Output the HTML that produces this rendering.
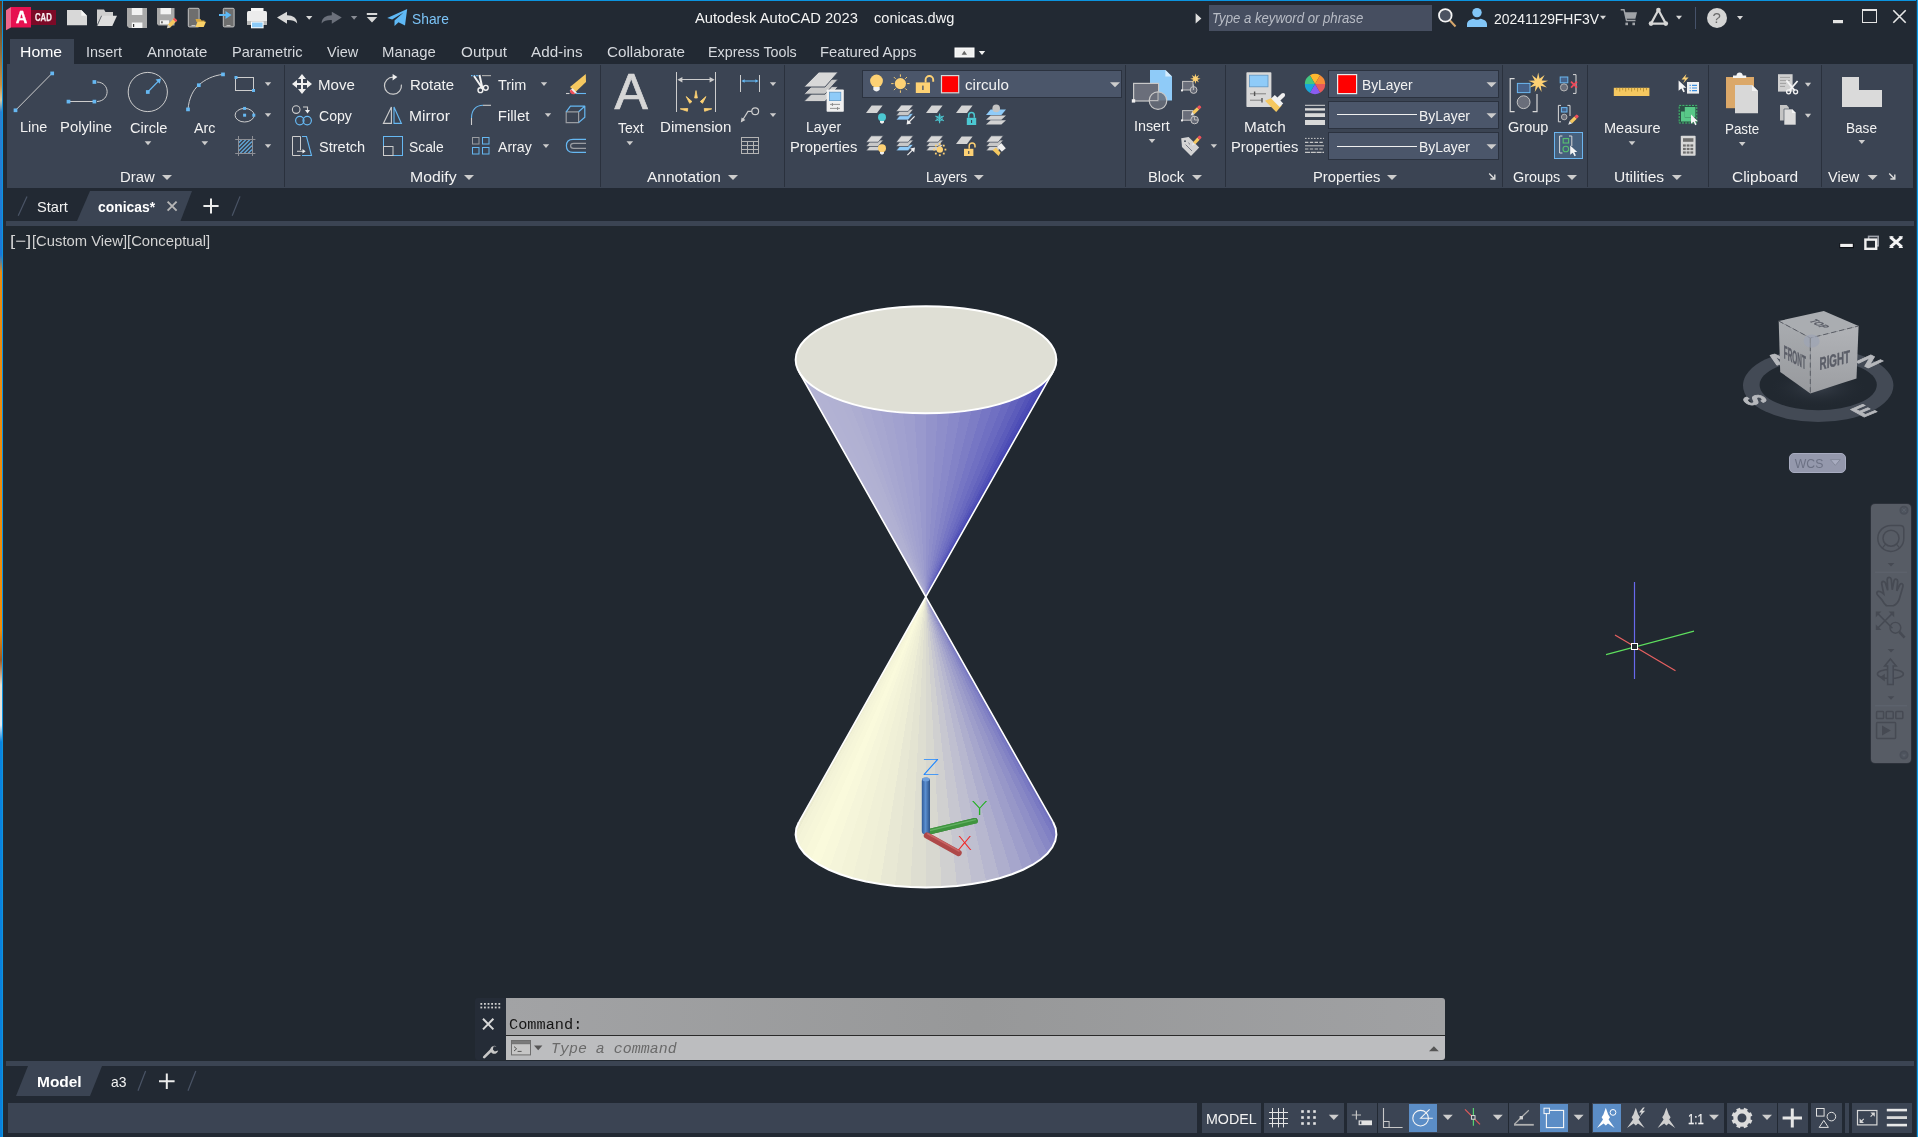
<!DOCTYPE html>
<html lang="en"><head><meta charset="utf-8"><title>Autodesk AutoCAD 2023 - conicas.dwg</title>
<style>
html,body{margin:0;padding:0;background:#222933;}
body{width:1918px;height:1137px;overflow:hidden;position:relative;font-family:"Liberation Sans",sans-serif;}
#app{position:absolute;left:0;top:0;width:1918px;height:1137px;overflow:hidden;background:#222933;}
.b{position:absolute;}
.t{z-index:3;}
#view{z-index:1;}
#icons{z-index:2;}
.t{position:absolute;white-space:pre;line-height:20px;height:20px;transform-origin:0 50%;font-family:"Liberation Sans",sans-serif;}
svg{position:absolute;left:0;top:0;overflow:visible;}
#view{will-change:transform;}
svg text{font-family:"Liberation Sans",sans-serif;}
svg text.cmp{font-weight:bold;fill:#b6b8bc;stroke:#b6b8bc;stroke-width:1.3px;stroke-linejoin:round;}
svg text.cube{font-weight:bold;fill:#5a5d67;stroke:#5a5d67;stroke-width:0.5px;}
svg text.thin{font-family:"DejaVu Sans","Liberation Sans",sans-serif;font-weight:200;}
</style></head>
<body><div id="app">
<div id="window">
<div class="b" style="left:0px;top:0px;width:2px;height:1137px;background:#0a78d0;background:linear-gradient(180deg,#5a3a1a 0px,#8a6a3a 50px,#c89040 85px,#d8c8a0 100px,#2a80d0 112px,#1a78d8 255px,#e88a10 272px,#f08c08 630px,#a05a20 660px,#e8e0d0 685px,#e0e8f0 725px,#0a84e0 742px,#0a80dc 1137px);"></div>
<div class="b" style="left:2px;top:0px;width:1px;height:1137px;background:#0b94e0;"></div>
<div class="b" style="left:3px;top:0px;width:1px;height:1137px;background:#262a32;"></div>
<div class="b" style="left:0px;top:0px;width:1918px;height:1px;background:#0b94e0;"></div>
<div class="b" style="left:1916px;top:0px;width:1px;height:1137px;background:#1f3f58;"></div>
<div class="b" style="left:1917px;top:0px;width:1px;height:1137px;background:#0b9ae8;"></div>
</div>
<main id="viewport">
<div class="b" style="left:4px;top:226px;width:1912px;height:835px;background:#212830;"></div>
<div class="b" style="left:1871px;top:504px;width:40px;height:259px;background:#575c65;border-radius:4px;box-shadow:0 0 0 1px #2c313a;"></div>
<div class="b" style="left:1789px;top:453px;width:57px;height:20px;background:#9498ac;border-radius:5px;border:1px solid #a8acc0;box-sizing:border-box;"></div>
<span class="t" style="left:10.14px;top:231px;font-size:15px;color:#d4d4d4;transform:scaleX(1.2467);">[−]</span>
<span class="t" style="left:32.01px;top:231px;font-size:15px;color:#d4d4d4;transform:scaleX(0.9861);">[Custom View][Conceptual]</span>
</main>
<header id="titlebar">
<div class="b" style="left:1209px;top:5px;width:223px;height:26px;background:#464e60;"></div>
<div class="b" style="left:1695px;top:7px;width:1px;height:22px;background:#46526a;"></div>
<span class="t" style="left:412.33px;top:9px;font-size:15px;color:#7cc4f8;transform:scaleX(0.9199);">Share</span>
<span class="t" style="left:694.85px;top:8px;font-size:15px;color:#f4f4f4;transform:scaleX(0.9812);">Autodesk AutoCAD 2023</span>
<span class="t" style="left:874.17px;top:8px;font-size:15px;color:#f4f4f4;transform:scaleX(0.9728);">conicas.dwg</span>
<span class="t" style="left:1211.76px;top:8px;font-size:15px;color:#b9bdc6;transform:scaleX(0.8779);font-style:italic;">Type a keyword or phrase</span>
<span class="t" style="left:1494.15px;top:9px;font-size:15px;color:#f4f4f4;transform:scaleX(0.9275);">20241129FHF3V</span>
<span class="t" style="left:15.80px;top:8px;font-size:16px;color:#ffffff;font-weight:bold;-webkit-text-stroke:0.3px #fff;">A</span>
<span class="t" style="left:35.14px;top:8px;font-size:10px;color:#f8eef0;transform:scaleX(0.7770);font-weight:bold;-webkit-text-stroke:0.25px #f8eef0;">CAD</span>
<span class="t" style="left:1712.60px;top:8px;font-size:15px;color:#6a6a6a;">?</span>
</header>
<nav id="ribbon-tabs">
<div class="b" style="left:10px;top:39px;width:64px;height:26px;background:#3b4453;"></div>
<span class="t" style="left:20.19px;top:42px;font-size:15px;color:#ffffff;transform:scaleX(1.0504);">Home</span>
<span class="t" style="left:86.16px;top:42px;font-size:15px;color:#d6d9de;transform:scaleX(0.9591);">Insert</span>
<span class="t" style="left:147.45px;top:42px;font-size:15px;color:#d6d9de;transform:scaleX(1.0034);">Annotate</span>
<span class="t" style="left:232.28px;top:42px;font-size:15px;color:#d6d9de;transform:scaleX(0.9739);">Parametric</span>
<span class="t" style="left:327.38px;top:42px;font-size:15px;color:#d6d9de;transform:scaleX(0.9666);">View</span>
<span class="t" style="left:382.26px;top:42px;font-size:15px;color:#d6d9de;transform:scaleX(0.9938);">Manage</span>
<span class="t" style="left:460.76px;top:42px;font-size:15px;color:#d6d9de;transform:scaleX(1.0192);">Output</span>
<span class="t" style="left:531.45px;top:42px;font-size:15px;color:#d6d9de;transform:scaleX(1.0154);">Add-ins</span>
<span class="t" style="left:606.69px;top:42px;font-size:15px;color:#d6d9de;transform:scaleX(1.0163);">Collaborate</span>
<span class="t" style="left:708.31px;top:42px;font-size:15px;color:#d6d9de;transform:scaleX(0.9535);">Express Tools</span>
<span class="t" style="left:820.27px;top:42px;font-size:15px;color:#d6d9de;transform:scaleX(0.9870);">Featured Apps</span>
</nav>
<section id="ribbon">
<div class="b" style="left:7px;top:64px;width:1906px;height:124px;background:#3b4453;"></div>
<div class="b" style="left:284px;top:65px;width:1px;height:122px;background:#2a313d;"></div>
<div class="b" style="left:600px;top:65px;width:1px;height:122px;background:#2a313d;"></div>
<div class="b" style="left:784px;top:65px;width:1px;height:122px;background:#2a313d;"></div>
<div class="b" style="left:1125px;top:65px;width:1px;height:122px;background:#2a313d;"></div>
<div class="b" style="left:1225px;top:65px;width:1px;height:122px;background:#2a313d;"></div>
<div class="b" style="left:1502px;top:65px;width:1px;height:122px;background:#2a313d;"></div>
<div class="b" style="left:1587px;top:65px;width:1px;height:122px;background:#2a313d;"></div>
<div class="b" style="left:1708px;top:65px;width:1px;height:122px;background:#2a313d;"></div>
<div class="b" style="left:1821px;top:65px;width:1px;height:122px;background:#2a313d;"></div>
<div class="b" style="left:862px;top:70px;width:260px;height:28px;background:#4b566a;box-sizing:border-box;border:1px solid #2b323f;"></div>
<div class="b" style="left:1328px;top:70px;width:171px;height:28px;background:#4b566a;box-sizing:border-box;border:1px solid #2b323f;"></div>
<div class="b" style="left:1328px;top:101px;width:171px;height:28px;background:#4b566a;box-sizing:border-box;border:1px solid #2b323f;"></div>
<div class="b" style="left:1328px;top:132px;width:171px;height:28px;background:#4b566a;box-sizing:border-box;border:1px solid #2b323f;"></div>
<div class="b" style="left:1554px;top:132px;width:29px;height:27px;background:#46607c;box-sizing:border-box;border:1px solid #6cb6f0;"></div>
<span class="t" style="left:19.90px;top:117px;font-size:15px;color:#f2f2f2;transform:scaleX(0.9605);">Line</span>
<span class="t" style="left:60.26px;top:117px;font-size:15px;color:#f2f2f2;transform:scaleX(0.9882);">Polyline</span>
<span class="t" style="left:129.72px;top:118px;font-size:15px;color:#f2f2f2;transform:scaleX(0.9763);">Circle</span>
<span class="t" style="left:194.45px;top:118px;font-size:15px;color:#f2f2f2;transform:scaleX(0.9537);">Arc</span>
<span class="t" style="left:119.86px;top:167px;font-size:15px;color:#f2f2f2;transform:scaleX(0.9904);">Draw</span>
<span class="t" style="left:317.99px;top:75px;font-size:15px;color:#f2f2f2;transform:scaleX(1.0065);">Move</span>
<span class="t" style="left:319.15px;top:106px;font-size:15px;color:#f2f2f2;transform:scaleX(0.9395);">Copy</span>
<span class="t" style="left:319.20px;top:137px;font-size:15px;color:#f2f2f2;transform:scaleX(0.9700);">Stretch</span>
<span class="t" style="left:409.65px;top:75px;font-size:15px;color:#f2f2f2;transform:scaleX(0.9959);">Rotate</span>
<span class="t" style="left:408.60px;top:106px;font-size:15px;color:#f2f2f2;transform:scaleX(1.0437);">Mirror</span>
<span class="t" style="left:409.23px;top:137px;font-size:15px;color:#f2f2f2;transform:scaleX(0.9234);">Scale</span>
<span class="t" style="left:409.59px;top:167px;font-size:15px;color:#f2f2f2;transform:scaleX(1.0541);">Modify</span>
<span class="t" style="left:497.66px;top:75px;font-size:15px;color:#f2f2f2;transform:scaleX(0.9645);">Trim</span>
<span class="t" style="left:497.75px;top:106px;font-size:15px;color:#f2f2f2;">Fillet</span>
<span class="t" style="left:497.70px;top:137px;font-size:15px;color:#f2f2f2;transform:scaleX(0.9414);">Array</span>
<span class="t" style="left:617.92px;top:118px;font-size:15px;color:#f2f2f2;transform:scaleX(0.9363);">Text</span>
<span class="t" style="left:659.84px;top:117px;font-size:15px;color:#f2f2f2;transform:scaleX(1.0058);">Dimension</span>
<span class="t" style="left:646.70px;top:167px;font-size:15px;color:#f2f2f2;transform:scaleX(1.0300);">Annotation</span>
<span class="t" style="left:805.58px;top:117px;font-size:15px;color:#f2f2f2;transform:scaleX(0.9364);">Layer</span>
<span class="t" style="left:789.67px;top:137px;font-size:15px;color:#f2f2f2;transform:scaleX(0.9839);">Properties</span>
<span class="t" style="left:964.84px;top:75px;font-size:15px;color:#f2f2f2;transform:scaleX(1.0107);">circulo</span>
<span class="t" style="left:925.85px;top:167px;font-size:15px;color:#f2f2f2;transform:scaleX(0.9151);">Layers</span>
<span class="t" style="left:1133.56px;top:116px;font-size:15px;color:#f2f2f2;transform:scaleX(0.9550);">Insert</span>
<span class="t" style="left:1147.77px;top:167px;font-size:15px;color:#f2f2f2;transform:scaleX(0.9866);">Block</span>
<span class="t" style="left:1243.62px;top:117px;font-size:15px;color:#f2f2f2;transform:scaleX(1.0214);">Match</span>
<span class="t" style="left:1230.77px;top:137px;font-size:15px;color:#f2f2f2;transform:scaleX(0.9839);">Properties</span>
<span class="t" style="left:1362.10px;top:75px;font-size:15px;color:#f2f2f2;transform:scaleX(0.9203);">ByLayer</span>
<span class="t" style="left:1418.74px;top:106px;font-size:15px;color:#f2f2f2;transform:scaleX(0.9268);">ByLayer</span>
<span class="t" style="left:1418.74px;top:137px;font-size:15px;color:#f2f2f2;transform:scaleX(0.9268);">ByLayer</span>
<span class="t" style="left:1312.77px;top:167px;font-size:15px;color:#f2f2f2;transform:scaleX(0.9839);">Properties</span>
<span class="t" style="left:1508.22px;top:117px;font-size:15px;color:#f2f2f2;transform:scaleX(0.9690);">Group</span>
<span class="t" style="left:1512.73px;top:167px;font-size:15px;color:#f2f2f2;transform:scaleX(0.9619);">Groups</span>
<span class="t" style="left:1603.69px;top:118px;font-size:15px;color:#f2f2f2;transform:scaleX(0.9673);">Measure</span>
<span class="t" style="left:1613.68px;top:167px;font-size:15px;color:#f2f2f2;transform:scaleX(1.0369);">Utilities</span>
<span class="t" style="left:1724.88px;top:119px;font-size:15px;color:#f2f2f2;transform:scaleX(0.8925);">Paste</span>
<span class="t" style="left:1731.68px;top:167px;font-size:15px;color:#f2f2f2;transform:scaleX(1.0312);">Clipboard</span>
<span class="t" style="left:1845.86px;top:118px;font-size:15px;color:#f2f2f2;transform:scaleX(0.9059);">Base</span>
<span class="t" style="left:1828.38px;top:167px;font-size:15px;color:#f2f2f2;transform:scaleX(0.9666);">View</span>
<span class="t" style="left:614.40px;top:62px;font-size:50px;color:#d6d6d6;line-height:60px;height:60px;-webkit-text-stroke:0.7px #d6d6d6;">A</span>
</section>
<div id="doc-tabs">
<div class="b" style="left:77px;top:191px;width:115px;height:30px;background:#3b4453;clip-path:polygon(13px 0,100% 0,calc(100% - 11.5px) 100%,0 100%);"></div>
<div class="b" style="left:6px;top:221px;width:1908px;height:5px;background:#3b4453;"></div>
<span class="t" style="left:36.79px;top:197px;font-size:15px;color:#f2f2f2;transform:scaleX(0.9741);">Start</span>
<span class="t" style="left:98.30px;top:197px;font-size:15px;color:#ffffff;transform:scaleX(0.9243);font-weight:bold;">conicas*</span>
</div>
<div id="command-line">
<div class="b" style="left:475px;top:998px;width:31px;height:62px;background:#252c37;border-radius:3px 0 0 3px;"></div>
<div class="b" style="left:506px;top:998px;width:939px;height:37px;background:#9b9c9e;background:linear-gradient(90deg,#a2a3a5 0%,#979899 50%,#a0a1a3 100%);border-radius:0 3px 0 0;"></div>
<div class="b" style="left:506px;top:1035px;width:939px;height:1px;background:#2a2a2a;"></div>
<div class="b" style="left:506px;top:1036px;width:939px;height:24px;background:#bcbdbf;border-radius:0 0 3px 0;"></div>
<span class="t" style="left:508.91px;top:1015px;font-size:14.5px;color:#151515;transform:scaleX(1.0532);font-family:'Liberation Mono',monospace;">Command:</span>
<span class="t" style="left:550.65px;top:1039px;font-size:14.5px;color:#6a6a6a;transform:scaleX(1.0312);font-style:italic;font-family:'Liberation Mono',monospace;">Type a command</span>
</div>
<div id="layout-tabs">
<div class="b" style="left:6px;top:1061px;width:1908px;height:5px;background:#3b4453;"></div>
<div class="b" style="left:16px;top:1066px;width:86px;height:30px;background:#3b4453;clip-path:polygon(12px 0,100% 0,calc(100% - 12px) 100%,0 100%);"></div>
<span class="t" style="left:36.94px;top:1072px;font-size:15px;color:#ffffff;transform:scaleX(1.0309);font-weight:bold;">Model</span>
<span class="t" style="left:111.14px;top:1072px;font-size:15px;color:#f2f2f2;transform:scaleX(0.9288);">a3</span>
</div>
<footer id="status-bar">
<div class="b" style="left:8px;top:1103px;width:1189px;height:30px;background:#3b4453;"></div>
<div class="b" style="left:1202px;top:1103px;width:59px;height:30px;background:#3b4453;"></div>
<div class="b" style="left:1264px;top:1103px;width:80px;height:30px;background:#3b4453;"></div>
<div class="b" style="left:1347px;top:1103px;width:30px;height:30px;background:#3b4453;"></div>
<div class="b" style="left:1378px;top:1103px;width:130px;height:30px;background:#3b4453;"></div>
<div class="b" style="left:1509px;top:1103px;width:80px;height:30px;background:#3b4453;"></div>
<div class="b" style="left:1592px;top:1103px;width:132px;height:30px;background:#3b4453;"></div>
<div class="b" style="left:1727px;top:1103px;width:50px;height:30px;background:#3b4453;"></div>
<div class="b" style="left:1778px;top:1103px;width:30px;height:30px;background:#3b4453;"></div>
<div class="b" style="left:1811px;top:1103px;width:31px;height:30px;background:#3b4453;"></div>
<div class="b" style="left:1845px;top:1103px;width:4px;height:30px;background:#3b4453;"></div>
<div class="b" style="left:1852px;top:1103px;width:60px;height:30px;background:#3b4453;"></div>
<div class="b" style="left:1409px;top:1104px;width:28px;height:28px;background:#5b8dc6;"></div>
<div class="b" style="left:1540px;top:1104px;width:28px;height:28px;background:#5b8dc6;"></div>
<div class="b" style="left:1593px;top:1104px;width:28px;height:28px;background:#5b8dc6;"></div>
<span class="t" style="left:1206.21px;top:1109px;font-size:15.5px;color:#f2f2f2;transform:scaleX(0.9195);">MODEL</span>
<span class="t" style="left:1688.21px;top:1109px;font-size:15.5px;color:#f2f2f2;transform:scaleX(0.7264);-webkit-text-stroke:0.25px #f2f2f2;">1:1</span>
</footer>
<svg id="view" width="1918" height="1137" viewBox="0 0 1918 1137">
<defs>
<radialGradient id="cubeShadow" cx="50%" cy="50%" r="50%"><stop offset="0" stop-color="#3a414c" stop-opacity="0.9"/><stop offset="1" stop-color="#212830" stop-opacity="0"/></radialGradient>
<linearGradient id="gFront" x1="0" y1="0" x2="0" y2="1"><stop offset="0" stop-color="#a9acb0"/><stop offset="1" stop-color="#97999d"/></linearGradient>
<linearGradient id="gRight" x1="0" y1="0" x2="0" y2="1"><stop offset="0" stop-color="#b1b3b7"/><stop offset="1" stop-color="#9c9ea2"/></linearGradient>
<linearGradient id="gZ" x1="0" y1="0" x2="1" y2="0"><stop offset="0" stop-color="#2f5a98"/><stop offset="0.45" stop-color="#5b8fd0"/><stop offset="1" stop-color="#2c5288"/></linearGradient>
<linearGradient id="gY" x1="0" y1="0" x2="0" y2="1"><stop offset="0" stop-color="#2e7a2e"/><stop offset="0.4" stop-color="#58a858"/><stop offset="1" stop-color="#286828"/></linearGradient>
<linearGradient id="gX" x1="0" y1="0" x2="0" y2="1"><stop offset="0" stop-color="#c05858"/><stop offset="0.5" stop-color="#b04848"/><stop offset="1" stop-color="#7a3030"/></linearGradient>
</defs>
<g id="model" shape-rendering="auto">
<g shape-rendering="crispEdges">
<path d="M925.8 596.8L798.96 371.77L802.10 376.38Z" fill="#b4b4d4" />
<path d="M925.8 596.8L802.10 376.38L806.24 380.86Z" fill="#b3b3d4" />
<path d="M925.8 596.8L806.24 380.86L811.33 385.17Z" fill="#b3b3d3" />
<path d="M925.8 596.8L811.33 385.17L817.34 389.28Z" fill="#b2b2d3" />
<path d="M925.8 596.8L817.34 389.28L824.22 393.15Z" fill="#b2b2d3" />
<path d="M925.8 596.8L824.22 393.15L831.92 396.75Z" fill="#b1b1d3" />
<path d="M925.8 596.8L831.92 396.75L840.37 400.05Z" fill="#b1b1d2" />
<path d="M925.8 596.8L840.37 400.05L849.51 403.03Z" fill="#b0b0d2" />
<path d="M925.8 596.8L849.51 403.03L859.26 405.66Z" fill="#adadd1" />
<path d="M925.8 596.8L859.26 405.66L869.55 407.93Z" fill="#aaaad1" />
<path d="M925.8 596.8L869.55 407.93L880.29 409.80Z" fill="#a7a7d0" />
<path d="M925.8 596.8L880.29 409.80L891.39 411.28Z" fill="#a4a4cf" />
<path d="M925.8 596.8L891.39 411.28L902.77 412.34Z" fill="#a1a1cf" />
<path d="M925.8 596.8L902.77 412.34L914.34 412.99Z" fill="#9e9ece" />
<path d="M925.8 596.8L914.34 412.99L926.00 413.20Z" fill="#9999cd" />
<path d="M925.8 596.8L926.00 413.20L937.66 412.99Z" fill="#9393cb" />
<path d="M925.8 596.8L937.66 412.99L949.23 412.34Z" fill="#8e8eca" />
<path d="M925.8 596.8L949.23 412.34L960.61 411.28Z" fill="#8989c9" />
<path d="M925.8 596.8L960.61 411.28L971.71 409.80Z" fill="#8383c7" />
<path d="M925.8 596.8L971.71 409.80L982.45 407.93Z" fill="#7d7dc5" />
<path d="M925.8 596.8L982.45 407.93L992.74 405.66Z" fill="#7676c4" />
<path d="M925.8 596.8L992.74 405.66L1002.49 403.03Z" fill="#7070c2" />
<path d="M925.8 596.8L1002.49 403.03L1011.63 400.05Z" fill="#6a6ac0" />
<path d="M925.8 596.8L1011.63 400.05L1020.08 396.75Z" fill="#6363bd" />
<path d="M925.8 596.8L1020.08 396.75L1027.78 393.15Z" fill="#5c5cbb" />
<path d="M925.8 596.8L1027.78 393.15L1034.66 389.28Z" fill="#5454b8" />
<path d="M925.8 596.8L1034.66 389.28L1040.67 385.17Z" fill="#4d4db6" />
<path d="M925.8 596.8L1040.67 385.17L1045.76 380.86Z" fill="#4848b3" />
<path d="M925.8 596.8L1045.76 380.86L1049.90 376.38Z" fill="#4242b0" />
<path d="M925.8 596.8L1049.90 376.38L1053.04 371.77Z" fill="#3d3dad" />
<path d="M925.8 596.8L798.96 821.93L796.35 828.25Z" fill="#e5e5cb" />
<path d="M925.8 596.8L796.35 828.25L795.61 834.66Z" fill="#ececd1" />
<path d="M925.8 596.8L795.61 834.66L796.74 841.05Z" fill="#f2f2d6" />
<path d="M925.8 596.8L796.74 841.05L799.72 847.34Z" fill="#f4f4d8" />
<path d="M925.8 596.8L799.72 847.34L804.52 853.44Z" fill="#f6f6d9" />
<path d="M925.8 596.8L804.52 853.44L811.06 859.26Z" fill="#f8f8da" />
<path d="M925.8 596.8L811.06 859.26L819.25 864.72Z" fill="#fafadc" />
<path d="M925.8 596.8L819.25 864.72L828.97 869.74Z" fill="#f8f8db" />
<path d="M925.8 596.8L828.97 869.74L840.08 874.25Z" fill="#f5f5da" />
<path d="M925.8 596.8L840.08 874.25L852.43 878.17Z" fill="#f3f3d8" />
<path d="M925.8 596.8L852.43 878.17L865.84 881.47Z" fill="#f0f0d7" />
<path d="M925.8 596.8L865.84 881.47L880.10 884.08Z" fill="#eeeed6" />
<path d="M925.8 596.8L880.10 884.08L895.03 885.97Z" fill="#e8e8d4" />
<path d="M925.8 596.8L895.03 885.97L910.40 887.12Z" fill="#e4e4d2" />
<path d="M925.8 596.8L910.40 887.12L926.00 887.50Z" fill="#deded1" />
<path d="M925.8 596.8L926.00 887.50L941.60 887.12Z" fill="#d8d8d0" />
<path d="M925.8 596.8L941.60 887.12L956.97 885.97Z" fill="#d0d0d0" />
<path d="M925.8 596.8L956.97 885.97L971.90 884.08Z" fill="#c7c7d0" />
<path d="M925.8 596.8L971.90 884.08L986.16 881.47Z" fill="#bfbfd0" />
<path d="M925.8 596.8L986.16 881.47L999.57 878.17Z" fill="#b7b7cf" />
<path d="M925.8 596.8L999.57 878.17L1011.92 874.25Z" fill="#aeaecd" />
<path d="M925.8 596.8L1011.92 874.25L1023.03 869.74Z" fill="#a6a6cc" />
<path d="M925.8 596.8L1023.03 869.74L1032.75 864.72Z" fill="#9e9eca" />
<path d="M925.8 596.8L1032.75 864.72L1040.94 859.26Z" fill="#9797c8" />
<path d="M925.8 596.8L1040.94 859.26L1047.48 853.44Z" fill="#9090c7" />
<path d="M925.8 596.8L1047.48 853.44L1052.28 847.34Z" fill="#8888c5" />
<path d="M925.8 596.8L1052.28 847.34L1055.26 841.05Z" fill="#8181c4" />
<path d="M925.8 596.8L1055.26 841.05L1056.39 834.66Z" fill="#7979c2" />
<path d="M925.8 596.8L1056.39 834.66L1055.65 828.25Z" fill="#7272bf" />
<path d="M925.8 596.8L1055.65 828.25L1053.04 821.93Z" fill="#6a6abd" />
</g>
<ellipse cx="926.0" cy="359.7" rx="130.4" ry="53.5" fill="#dfdfd5"/>
<ellipse cx="926.0" cy="359.7" rx="130.4" ry="53.5" fill="none" stroke="#ffffff" stroke-width="1.9"/>
<path d="M798.96 821.93 L796.35 828.25 L795.61 834.66 L796.74 841.05 L799.72 847.34 L804.52 853.44 L811.06 859.26 L819.25 864.72 L828.97 869.74 L840.08 874.25 L852.43 878.17 L865.84 881.47 L880.10 884.08 L895.03 885.97 L910.40 887.12 L926.00 887.50 L941.60 887.12 L956.97 885.97 L971.90 884.08 L986.16 881.47 L999.57 878.17 L1011.92 874.25 L1023.03 869.74 L1032.75 864.72 L1040.94 859.26 L1047.48 853.44 L1052.28 847.34 L1055.26 841.05 L1056.39 834.66 L1055.65 828.25 L1053.04 821.93" fill="none" stroke="#ffffff" stroke-width="2"/>
<path d="M798.96 821.93L925.8 596.8L1053.04 821.93" fill="none" stroke="#ffffff" stroke-width="1.6"/>
<path d="M798.96 371.77L925.8 596.8L1053.04 371.77" fill="none" stroke="#ffffff" stroke-width="1.6"/>
</g>
<g id="ucs">
<line x1="929" y1="831.8" x2="975" y2="820.8" stroke="url(#gY)" stroke-width="5.6" stroke-linecap="round"/>
<line x1="929" y1="831.8" x2="975" y2="820.8" stroke="#3f943f" stroke-width="5.6" stroke-linecap="round"/>
<line x1="929.6" y1="830.6" x2="975.4" y2="819.6" stroke="#62b062" stroke-width="1.4" stroke-linecap="round"/>
<rect x="921.8" y="777.5" width="8.2" height="57" rx="3.4" fill="url(#gZ)"/>
<ellipse cx="925.9" cy="779.4" rx="3.6" ry="1.9" fill="#6fa0dc"/>
<line x1="927" y1="835.5" x2="958.5" y2="853" stroke="#ae4848" stroke-width="6.4" stroke-linecap="round"/>
<line x1="927.8" y1="833.8" x2="959" y2="851" stroke="#c86464" stroke-width="1.6" stroke-linecap="round"/>
<text x="922.6" y="774.7" class="thin" font-size="21.5" fill="#1e86ff" textLength="17" lengthAdjust="spacingAndGlyphs">Z</text>
<text x="971.4" y="814.8" class="thin" font-size="19.6" fill="#22b022" textLength="16.2" lengthAdjust="spacingAndGlyphs">Y</text>
<text x="956.6" y="850.2" class="thin" font-size="19.6" fill="#f02828" textLength="16.2" lengthAdjust="spacingAndGlyphs">X</text>
</g>
<g id="crosshair">
<line x1="1634.5" y1="582" x2="1634.5" y2="679" stroke="#6868ec" stroke-width="1.2"/>
<line x1="1606" y1="654.6" x2="1694" y2="631.2" stroke="#5ee05e" stroke-width="1.2"/>
<line x1="1615" y1="635" x2="1675.5" y2="670.8" stroke="#e66060" stroke-width="1.2"/>
<rect x="1631.5" y="643.5" width="6" height="6" fill="#212830" stroke="#ffffff" stroke-width="1"/>
</g>
<g id="vpctl">
<rect x="1839.4" y="243.2" width="14.4" height="5" fill="#0c0f14"/>
<rect x="1840.2" y="243.8" width="12.6" height="3.2" fill="#f0f0f0"/>
<rect x="1868.6" y="236.4" width="9.6" height="9.4" fill="none" stroke="#9ea2aa" stroke-width="1.6"/>
<rect x="1865.4" y="239.6" width="10.8" height="9.2" fill="#212830" stroke="#f0f0f0" stroke-width="2.4"/>
<path d="M1890.4 237.2L1901.8 246.8M1901.8 237.2L1890.4 246.8" stroke="#f4f4f4" stroke-width="3"/>
<path d="M1889.4 247.4H1893.4M1898.8 247.4H1902.8M1889.4 236.8H1893.4M1898.8 236.8H1902.8" stroke="#f4f4f4" stroke-width="1.2"/>
</g>
<g id="viewcube">
<ellipse cx="1818.2" cy="385.4" rx="75.2" ry="36.6" fill="#434a55"/>
<ellipse cx="1818.2" cy="385" rx="58.6" ry="25.2" fill="#212830"/>
<ellipse cx="1818" cy="388" rx="50" ry="20" fill="url(#cubeShadow)"/>
<text class="cmp" transform="matrix(0.429 0.440 -0.904 0.209 1755.0 400.0)" font-size="30" text-anchor="middle" y="10.5">S</text>
<text class="cmp" transform="matrix(0.753 -0.320 0.658 0.367 1863.4 410.6)" font-size="30" text-anchor="middle" y="10.5">E</text>
<text class="cmp" transform="matrix(-0.693 -0.351 0.720 -0.338 1869.4 361.4)" font-size="30" text-anchor="middle" y="10.5">N</text>
<text class="cmp" transform="matrix(-0.838 0.266 -0.546 -0.408 1783.5 357.2)" font-size="30" text-anchor="middle" y="10.5">W</text>
<path d="M1778.7 321L1823.8 311L1858.6 326L1810.3 338Z" fill="#aaadb1"/>
<path d="M1778.7 321L1810.3 338V393.4L1780.2 372Z" fill="url(#gFront)"/>
<path d="M1810.3 338L1858.6 326L1856.5 378.4L1810.3 393.4Z" fill="url(#gRight)"/>
<path d="M1778.7 321L1810.3 338L1858.6 326M1810.3 338V393.4" fill="none" stroke="#5c5f67" stroke-width="1" stroke-dasharray="5 3.2"/>
<ellipse cx="1811.6" cy="341" rx="8" ry="6.6" fill="#9ea4b4" opacity="0.75"/>
<path d="M1810.3 338V348" fill="none" stroke="#83868c" stroke-width="0.8"/>
<text class="cube" transform="matrix(1 0.52 0 1 1783.8 358.0)" font-size="18.6" textLength="22" lengthAdjust="spacingAndGlyphs">FRONT</text>
<text class="cube" transform="matrix(1 -0.25 0 1 1819.6 369.9)" font-size="17.6" textLength="30.4" lengthAdjust="spacingAndGlyphs">RIGHT</text>
<text class="cube" transform="matrix(0.46 0.252 -0.73 0.193 1819.4 323.9)" font-size="15" text-anchor="middle" y="5.4">TOP</text>
</g>
<g id="wcs">
<text x="1794.8" y="468.4" font-size="13.4" fill="#6c7184" textLength="28.6" lengthAdjust="spacingAndGlyphs">WCS</text>
<path d="M1830.4 459.6H1840.2L1835.3 465.4Z" fill="#a8acc0" stroke="#7c8192" stroke-width="0.8"/>
</g>
<g id="navbar" fill="none" stroke="#464a53" stroke-width="1.5">
<circle cx="1904" cy="510.2" r="3.8" fill="#4e545e" stroke="#4a4f59"/><path d="M1902.2 508.4L1905.8 512M1905.8 508.4L1902.2 512" stroke="#5b616b" stroke-width="1"/>
<path d="M1891 525.4A13 13 0 1 0 1903.8 538.2V529Q1903.8 525.4 1900 525.4Z"/>
<circle cx="1891" cy="538.2" r="8"/>
<path d="M1885.6 544.2L1882 548.4M1896.4 544.2L1900 548.4" stroke-width="1.3"/>
<path d="M1887.6 563L1894.4 563L1891 566.6Z" fill="#464a53" stroke="none"/>
<path d="M1875 572.2H1907" stroke="#5f656f" stroke-width="1"/>
<path transform="translate(1890.4 591.6) scale(1.14) translate(-1890.4 -591.2)" d="M1883 598.5L1879.4 594.4Q1877.4 592 1879.6 591Q1881.4 590.6 1883.4 592.4L1884.6 593.4L1882.8 584.4Q1882.6 582.4 1884.2 582.2Q1885.6 582.2 1886.2 584L1888 590L1887.6 580.6Q1887.8 578.8 1889.4 578.8Q1890.8 578.8 1891.2 580.6L1892 589.6L1893.6 581.6Q1894 580 1895.4 580.2Q1896.8 580.4 1896.8 582.2L1896 590.6L1898.6 585.2Q1899.4 583.8 1900.6 584.4Q1901.8 585 1901.4 586.8L1898.4 597Q1897.2 601.6 1893 603.6H1887Q1884.6 601.6 1883 598.5Z"/>
<path d="M1877.6 613.4L1892.4 628.2M1892.4 613.4L1877.6 628.2" stroke-width="1.5"/>
<path d="M1875.8 611.6H1881.4L1875.8 617.2ZM1894.2 611.6H1888.6L1894.2 617.2ZM1875.8 630V624.4L1881.4 630Z" fill="#464a53" stroke="none"/>
<circle cx="1895.4" cy="627.8" r="5.4" stroke-width="1.4"/><path d="M1899.4 632L1904.6 637.6" stroke-width="2.6"/>
<path d="M1887.6 649L1894.4 649L1891 652.6Z" fill="#464a53" stroke="none"/>
<ellipse cx="1890.4" cy="674" rx="13" ry="4.6"/>
<path d="M1887.6 684.6V666H1884.6L1890.4 659L1896.2 666H1893.2V684.6Z" fill="#555b65"/>
<path d="M1884.8 673.8L1879.6 677.6L1884.8 681.4Z" fill="#464a53" stroke="none"/>
<path d="M1887.6 696.2L1894.4 696.2L1891 699.8Z" fill="#464a53" stroke="none"/>
<path d="M1875 705.8H1907" stroke="#5f656f" stroke-width="1"/>
<rect x="1876.6" y="711.6" width="7" height="7" rx="0.8"/><rect x="1886.2" y="711.6" width="7" height="7" rx="0.8"/><rect x="1895.8" y="711.6" width="7" height="7" rx="0.8"/>
<rect x="1876.6" y="722.6" width="19" height="15.8" rx="0.8"/>
<path d="M1882 725.6V735.6L1890.8 730.6Z" fill="#464a53" stroke="none"/>
<circle cx="1904" cy="755" r="3.8" fill="#4e545e" stroke="#4a4f59"/><path d="M1902 754.4H1906L1904 757Z" fill="#5b616b" stroke="none"/>
</g>
</svg>
<svg id="icons" width="1918" height="1137" viewBox="0 0 1918 1137">
<g id="titlebar-icons">
<path d="M6 10.2L11 7V27.5L6 30.2Z" fill="#f0668c" />
<rect x="11" y="7" width="20" height="20.5" fill="#e61150" />
<rect x="31" y="10" width="25" height="15" fill="#7c0a27" />
<path d="M67 10H81.3L87 15.7V25.3H67Z" fill="#d8d8d8" />
<path d="M81.3 10L87 15.7H81.3Z" fill="#f6f6f6" />
<path d="M97 9.5H104L105.5 12H113V16H101.5L97 25Z" fill="#cfcfcf" />
<path d="M101.6 15.7H117L112.3 26H97Z" fill="#dedede" />
<path d="M101.6 15.7L97 26" fill="none" stroke="#5a5f68" stroke-width="0.8" />
<path d="M127 8H147V28H129L127 26Z" fill="#a9a9a9" />
<rect x="131.8" y="8" width="10.6" height="7" fill="#f2f2f2" />
<rect x="131.8" y="22.5" width="10.6" height="5.5" fill="#f6f6f6" />
<rect x="133" y="24" width="1.2" height="3" fill="#333" />
<path d="M157 8H174.5V25.5H158.5L157 24Z" fill="#a9a9a9" />
<rect x="160.5" y="8" width="10.5" height="6.3" fill="#f2f2f2" />
<rect x="160" y="20.3" width="9" height="4" fill="#f2f2f2" />
<rect x="161.3" y="21.3" width="1.3" height="2" fill="#333" />
<path d="M174.3 17.8L177.2 20.6L170.5 27.2L167.2 28.2L168 24.6Z" fill="#f5c860" />
<path d="M174.3 17.8L177.2 20.6L175.8 22L172.9 19.2Z" fill="#f0505a" />
<path d="M168 24.6L170.5 27.2L167.2 28.2Z" fill="#d0d0d0" />
<rect x="188.3" y="8.3" width="10.8" height="18.6" fill="#6e6e6e" stroke="#c4c4c4" stroke-width="1" rx="1" />
<rect x="191.5" y="25" width="4" height="1" fill="#c4c4c4" />
<path d="M195.5 19H200.5L201.5 20.5H204.5V22H196.5Z" fill="#d8a840" />
<path d="M197.5 21.8H206L203.7 27H195.5Z" fill="#fbd167" />
<rect x="223.3" y="8.3" width="10.8" height="18.6" fill="#6e6e6e" stroke="#c4c4c4" stroke-width="1" rx="1" />
<rect x="226.5" y="25" width="4" height="1" fill="#c4c4c4" />
<path d="M219 14H225.5V11L231.5 15L225.5 19V16H219Z" fill="#5db9f6" />
<rect x="251" y="8" width="12.5" height="5" fill="#f6f6f6" />
<path d="M247 12.5Q247 11 248.5 11H265.5Q267 11 267 12.5V25H247Z" fill="#ececec" />
<rect x="247" y="21" width="20" height="4" fill="#b9b9b9" />
<rect x="251" y="21.5" width="12.6" height="6.8" fill="#fff" />
<rect x="252" y="22.5" width="10.6" height="4.8" fill="#8ccbf8" />
<path d="M277 17.6L287 11.7V15.3C293 15.3 297 18 297.2 23.4C295 20.6 292 19.8 287 19.9V23.8Z" fill="#d8d8d8" />
<path d="M306.0 16H312.4L309.2 19.8Z" fill="#d8d8d8" />
<path d="M341.8 17.6L331.8 11.7V15.3C325.8 15.3 321.8 18 321.6 23.4C323.8 20.6 326.8 19.8 331.8 19.9V23.8Z" fill="#6b707b" />
<path d="M350.90000000000003 16H357.3L354.1 19.8Z" fill="#888c94" />
<rect x="366.8" y="13" width="10.4" height="2" fill="#d8d8d8" />
<path d="M366.8 17H377.2L372 22.6Z" fill="#d8d8d8" />
<path d="M387.2 18L407.2 9L405 25.6L398.5 22.2L394.5 26V20.6L403.5 12.5L392.2 19.6Z" fill="#5fb9f6" />
<path d="M1195.6 13.3L1201.4 18.4L1195.6 23.5Z" fill="#e0e0e0" />
<line x1="1450" y1="20.5" x2="1455.5" y2="26.5" stroke="#d6a66c" stroke-width="2" />
<circle cx="1445.3" cy="15.4" r="6.3" fill="#4b5261" stroke="#f4f4f4" stroke-width="1.8" />
<circle cx="1477" cy="12.6" r="4.7" fill="#82c6f8" />
<path d="M1467 27V24.5C1467 21 1470 19.3 1473.5 18.7Q1477 20.6 1480.5 18.7C1484 19.3 1487 21 1487 24.5V27Z" fill="#82c6f8" />
<path d="M1600.0 15.8H1606.0L1603 19.400000000000002Z" fill="#d8d8d8" />
<path d="M1620.7 9.8H1624L1626.5 20.5H1635.5" fill="none" stroke="#a0a3a8" stroke-width="1.4" />
<path d="M1624.6 12.2H1637L1635.4 18.8H1626.2Z" fill="#a0a3a8" />
<rect x="1625.4" y="22.6" width="2.6" height="2.6" fill="#a0a3a8" />
<rect x="1632.4" y="22.6" width="2.6" height="2.6" fill="#a0a3a8" />
<path d="M1658.4 10L1651 23.6H1665.8Z" fill="none" stroke="#d6d6d6" stroke-width="2.2" stroke-linejoin="round"/>
<circle cx="1658.4" cy="10" r="2.3" fill="#d6d6d6" />
<circle cx="1651" cy="23.6" r="2.3" fill="#d6d6d6" />
<circle cx="1665.8" cy="23.6" r="2.3" fill="#d6d6d6" />
<path d="M1676.0 15.8H1682.0L1679 19.400000000000002Z" fill="#d8d8d8" />
<circle cx="1717" cy="18" r="10" fill="#d4d4d4" />
<path d="M1737.0 16H1743.0L1740 19.8Z" fill="#d8d8d8" />
<rect x="1833" y="20" width="10" height="3.2" fill="#e4e4e4" />
<rect x="1862.5" y="9.5" width="14" height="13" fill="none" stroke="#e4e4e4" stroke-width="1" />
<rect x="1862" y="9" width="15" height="2" fill="#e4e4e4" />
<path d="M1893.3 10.3L1905.7 22.7M1905.7 10.3L1893.3 22.7" fill="none" stroke="#e8e8e8" stroke-width="1.6" />
<rect x="955" y="48" width="19" height="9" fill="#f0f0f0" stroke="#ffffff" stroke-width="1" />
<path d="M961.6 54.7L964.3 50.8L967 54.7Z" fill="#666" />
<path d="M978.8 51H985.2L982 54.9Z" fill="#f0f0f0" />
</g>
<g id="ribbon-draw">
<line x1="15.5" y1="110.3" x2="52" y2="73.4" stroke="#cdcdcd" stroke-width="1" />
<rect x="13.65" y="108.45" width="3.7" height="3.7" fill="#66b8f2" />
<rect x="50.35" y="71.55000000000001" width="3.7" height="3.7" fill="#66b8f2" />
<path d="M68.5 101.5H94.4M97 82C110.5 82.5 110.5 101 97 101.5" fill="none" stroke="#cdcdcd" stroke-width="1" />
<rect x="66.65" y="99.75" width="3.7" height="3.7" fill="#66b8f2" />
<rect x="92.55000000000001" y="99.75" width="3.7" height="3.7" fill="#66b8f2" />
<rect x="92.55000000000001" y="80.15" width="3.7" height="3.7" fill="#66b8f2" />
<circle cx="147.8" cy="92" r="19.6" fill="none" stroke="#cdcdcd" stroke-width="1" />
<line x1="147.8" y1="92" x2="159" y2="80.5" stroke="#66b8f2" stroke-width="1.1" />
<path d="M161 78.4L155.6 79.6L159.8 83.8Z" fill="#66b8f2" />
<rect x="145.95000000000002" y="90.15" width="3.7" height="3.7" fill="#66b8f2" />
<path d="M188 109.4C189 98 193 90 198.8 85C205 79.5 213 75.5 223 74.4" fill="none" stroke="#cdcdcd" stroke-width="1" />
<rect x="186.15" y="107.55000000000001" width="3.7" height="3.7" fill="#66b8f2" />
<rect x="196.95000000000002" y="83.35000000000001" width="3.7" height="3.7" fill="#66b8f2" />
<rect x="221.15" y="72.55000000000001" width="3.7" height="3.7" fill="#66b8f2" />
<path d="M144.7 141.2H151.3L148 145.2Z" fill="#cdcdcd" />
<path d="M201.5 141.2H208.10000000000002L204.8 145.2Z" fill="#cdcdcd" />
<path d="M162.0 175H172.0L167 180Z" fill="#cdcdcd" />
<rect x="235.5" y="77.5" width="18" height="13" fill="none" stroke="#cdcdcd" stroke-width="1" />
<rect x="234.5" y="76.0" width="3" height="3" fill="#66b8f2" />
<rect x="252.0" y="89.0" width="3" height="3" fill="#66b8f2" />
<path d="M264.8 82.2H271.2L268 86.0Z" fill="#cdcdcd" />
<ellipse cx="244.6" cy="115.2" rx="9.5" ry="6.8" fill="none" stroke="#cdcdcd" stroke-width="1" />
<rect x="243.1" y="113.7" width="3" height="3" fill="#66b8f2" />
<rect x="243.1" y="106.9" width="3" height="3" fill="#66b8f2" />
<rect x="252.3" y="113.7" width="3" height="3" fill="#66b8f2" />
<path d="M264.8 113.2H271.2L268 117.0Z" fill="#cdcdcd" />
<clipPath id="hc"><rect x="238.2" y="139.3" width="13.6" height="13.6"/></clipPath>
<g clip-path="url(#hc)" stroke="#66b8f2" stroke-width="1.1">
<line x1="224" y1="153.5" x2="239" y2="138.5"/>
<line x1="228" y1="153.5" x2="243" y2="138.5"/>
<line x1="232" y1="153.5" x2="247" y2="138.5"/>
<line x1="236" y1="153.5" x2="251" y2="138.5"/>
<line x1="240" y1="153.5" x2="255" y2="138.5"/>
<line x1="244" y1="153.5" x2="259" y2="138.5"/>
<line x1="248" y1="153.5" x2="263" y2="138.5"/>
<line x1="252" y1="153.5" x2="267" y2="138.5"/>
</g>
<path d="M238.5 136V156M252.5 136V156M235.2 139.5H255.4M235.2 153.5H255.4" fill="none" stroke="#8e9096" stroke-width="1" />
<path d="M264.8 144.2H271.2L268 148.0Z" fill="#cdcdcd" />
</g>
<g id="ribbon-modify">
<path d="M302 74L306 79H303V83H307V80L312 84L307 88V85H303V89H306L302 94L298 89H301V85H297V88L292 84L297 80V83H301V79H298Z" fill="#f0f0f0" />
<path d="M393 77.2A8.5 8.5 0 1 0 401.4 84.6" fill="none" stroke="#cdcdcd" stroke-width="1.2" />
<path d="M392.6 74L397.4 77L392.6 80.4Z" fill="#f0f0f0" />
<circle cx="296.2" cy="109.6" r="3.8" fill="none" stroke="#cdcdcd" stroke-width="1.1" />
<path d="M303 107H307.5V110.5" fill="none" stroke="#cdcdcd" stroke-width="1.1" />
<path d="M305 110L307.5 113.4L310 110Z" fill="#f0f0f0" />
<circle cx="299.8" cy="120.6" r="4.2" fill="none" stroke="#66b8f2" stroke-width="1.2" />
<circle cx="307.2" cy="120.6" r="4.2" fill="none" stroke="#66b8f2" stroke-width="1.2" />
<path d="M300.5 136.5H292.5V155.5H300.5" fill="none" stroke="#cdcdcd" stroke-width="1" />
<path d="M300.5 136.5V150" fill="none" stroke="#cdcdcd" stroke-width="1" />
<path d="M302 136.5H306.5L311.5 155.5H302" fill="none" stroke="#66b8f2" stroke-width="1.1" />
<path d="M297 151.3H303" fill="none" stroke="#cdcdcd" stroke-width="1.1" />
<path d="M302.5 149L305.6 151.3L302.5 153.6Z" fill="#f0f0f0" />
<path d="M391.4 107L383.4 123.4H391.4Z" fill="none" stroke="#cdcdcd" stroke-width="1.1" />
<path d="M394 107L401.4 123.4H394Z" fill="none" stroke="#66b8f2" stroke-width="1.1" />
<rect x="383.5" y="136.5" width="19" height="19" fill="none" stroke="#66b8f2" stroke-width="1" />
<rect x="383.5" y="146.5" width="9.5" height="9" fill="#3b4453" stroke="#cdcdcd" stroke-width="1" />
<path d="M471 75.6H480" fill="none" stroke="#66b8f2" stroke-width="1.2" stroke-dasharray="1.6 1"/>
<path d="M482 75.6H491" fill="none" stroke="#a8a8a8" stroke-width="1.2" />
<path d="M474 76L482.5 88.5M479.5 75L482.5 88.5" fill="none" stroke="#f2f2f2" stroke-width="2" />
<circle cx="480.4" cy="90.2" r="2.4" fill="none" stroke="#f2f2f2" stroke-width="1.4" />
<circle cx="485.8" cy="87.8" r="2.4" fill="none" stroke="#f2f2f2" stroke-width="1.4" />
<path d="M540.8 82.2H547.2L544 86.0Z" fill="#cdcdcd" />
<path d="M471.5 125V118" fill="none" stroke="#cdcdcd" stroke-width="1.1" />
<path d="M471.5 118C471.5 110 476 105.3 483 105.3" fill="none" stroke="#66b8f2" stroke-width="1.1" />
<path d="M483 105.3H491" fill="none" stroke="#cdcdcd" stroke-width="1.1" />
<path d="M544.8 113.2H551.2L548 117.0Z" fill="#cdcdcd" />
<rect x="472.5" y="137.5" width="6.5" height="6.5" fill="none" stroke="#9a9da2" stroke-width="1" />
<rect x="482.5" y="137.5" width="6.5" height="6.5" fill="none" stroke="#66b8f2" stroke-width="1" />
<rect x="472.5" y="147.5" width="6.5" height="6.5" fill="none" stroke="#66b8f2" stroke-width="1" />
<rect x="482.5" y="147.5" width="6.5" height="6.5" fill="none" stroke="#66b8f2" stroke-width="1" />
<path d="M542.8 144.2H549.2L546 148.0Z" fill="#cdcdcd" />
<path d="M585.8 74L586 82L575.5 92L570 87Z" fill="#f5c860" />
<path d="M572.6 88.2L577 92.8L574 94.2L569.6 90.5Z" fill="#f0f0f0" />
<path d="M571.2 89.6L575.2 93.6Q572.8 95 570.6 93Q569 91.2 571.2 89.6Z" fill="#f0505a" />
<path d="M566 93.5H569.5" fill="none" stroke="#cdcdcd" stroke-width="1.1" />
<path d="M576 93.5H586" fill="none" stroke="#66b8f2" stroke-width="1.1" />
<path d="M566.2 111.8H578.6V122.6H566.2Z" fill="none" stroke="#9a9da2" stroke-width="1.2" />
<path d="M566.2 111.8L570.4 106.2H584.8L578.6 111.8M584.8 106.2V117.2L578.6 122.6" fill="none" stroke="#66b8f2" stroke-width="1.2" stroke-linejoin="round"/>
<path d="M586 139.4H573Q566.4 139.4 566.4 145.8Q566.4 152.4 573 152.4H586" fill="none" stroke="#66b8f2" stroke-width="1.2" />
<path d="M586 143.4H573.6Q570.6 143.4 570.6 145.8Q570.6 148.4 573.6 148.4H586" fill="none" stroke="#9a9da2" stroke-width="1.2" />
<path d="M464.0 175H474.0L469 180Z" fill="#cdcdcd" />
</g>
<g id="ribbon-annotation">
<path d="M676.5 72V112M715.5 72V112" fill="none" stroke="#cdcdcd" stroke-width="1" />
<path d="M681 79.5H711" fill="none" stroke="#cdcdcd" stroke-width="1" />
<path d="M677.4 79.8L682.4 77V82.6ZM714.6 79.8L709.6 77V82.6Z" fill="#cdcdcd" />
<path d="M-1.4 3.6L0 -3.8L1.4 3.6Z" fill="#fdd174" stroke="#fdd174" stroke-width="0.8" stroke-linejoin="round" transform="translate(696 94.4) rotate(0)"/>
<path d="M-1.4 3.6L0 -3.8L1.4 3.6Z" fill="#fdd174" stroke="#fdd174" stroke-width="0.8" stroke-linejoin="round" transform="translate(688.6 99.60000000000001) rotate(-38)"/>
<path d="M-1.4 3.6L0 -3.8L1.4 3.6Z" fill="#fdd174" stroke="#fdd174" stroke-width="0.8" stroke-linejoin="round" transform="translate(703.6 99.60000000000001) rotate(38)"/>
<path d="M-1.4 3.6L0 -3.8L1.4 3.6Z" fill="#fdd174" stroke="#fdd174" stroke-width="0.8" stroke-linejoin="round" transform="translate(684 109.4) rotate(-82)"/>
<path d="M-1.4 3.6L0 -3.8L1.4 3.6Z" fill="#fdd174" stroke="#fdd174" stroke-width="0.8" stroke-linejoin="round" transform="translate(708 109.4) rotate(82)"/>
<path d="M740.5 75V92M759.5 75V92" fill="none" stroke="#cdcdcd" stroke-width="1" />
<path d="M743 81H757" fill="none" stroke="#66b8f2" stroke-width="1.2" />
<path d="M741.4 81L744.6 79.2V82.8ZM758.6 81L755.4 79.2V82.8Z" fill="#66b8f2" />
<path d="M769.8 82.2H776.2L773 86.0Z" fill="#cdcdcd" />
<circle cx="755.2" cy="111.2" r="3.4" fill="none" stroke="#cdcdcd" stroke-width="1.2" />
<path d="M751.8 111.4H748L742.6 120" fill="none" stroke="#cdcdcd" stroke-width="1.2" />
<path d="M740.8 122.4L741.6 117.6L745.4 120Z" fill="#cdcdcd" />
<path d="M769.8 113.2H776.2L773 117.0Z" fill="#cdcdcd" />
<rect x="741.5" y="137.5" width="17" height="16" fill="none" stroke="#b4b4b4" stroke-width="1" />
<path d="M741 141.5H759M741 145.5H759M741 149.5H759M747.5 141.5V153M753.5 141.5V153" fill="none" stroke="#b4b4b4" stroke-width="1" />
<path d="M728.0 175H738.0L733 180Z" fill="#cdcdcd" />
</g>
<g id="ribbon-layers">
<path d="M818.8 86.6H838.2L825 101.6H803.8Z" fill="#d0d0d0" stroke="#3b4453" stroke-width="0.9" />
<path d="M818.8 79.2H838.2L825 94.2H803.8Z" fill="#cacaca" stroke="#3b4453" stroke-width="0.9" />
<path d="M818.8 72H838.2L825 87H803.8Z" fill="#d8d8d8" stroke="#3b4453" stroke-width="0.9" />
<rect x="826.6" y="89.4" width="17.2" height="22.4" fill="#f0f0f0" rx="0.8" />
<rect x="829.4" y="92.2" width="11.4" height="8.4" fill="#8fcbf8" stroke="#5f97c4" stroke-width="0.8" />
<path d="M830 104.4H840M830 108.4H840" fill="none" stroke="#8a8a8a" stroke-width="0.9" />
<path d="M832.4 103V106M837.6 107V110" fill="none" stroke="#8a8a8a" stroke-width="1" />
<circle cx="876.5" cy="81" r="6.4" fill="#fdd174" />
<path d="M873.3 87.08H879.7V89.64Q876.5 93.16 873.3 89.64Z" fill="#f0f0f0" />
<circle cx="900.4" cy="83.6" r="5.6" fill="#fdd174" />
<line x1="907.2" y1="83.6" x2="909.6" y2="83.6" stroke="#fdd174" stroke-width="1" />
<line x1="905.21" y1="88.41" x2="906.91" y2="90.11" stroke="#fdd174" stroke-width="1" />
<line x1="900.4" y1="90.4" x2="900.4" y2="92.8" stroke="#fdd174" stroke-width="1" />
<line x1="895.59" y1="88.41" x2="893.89" y2="90.11" stroke="#fdd174" stroke-width="1" />
<line x1="893.6" y1="83.6" x2="891.2" y2="83.6" stroke="#fdd174" stroke-width="1" />
<line x1="895.59" y1="78.79" x2="893.89" y2="77.09" stroke="#fdd174" stroke-width="1" />
<line x1="900.4" y1="76.8" x2="900.4" y2="74.4" stroke="#fdd174" stroke-width="1" />
<line x1="905.21" y1="78.79" x2="906.91" y2="77.09" stroke="#fdd174" stroke-width="1" />
<rect x="915.8" y="82.4" width="14.2" height="10.6" fill="#fdd174" />
<path d="M925.6 82.4V79.8A3.8 3.8 0 0 1 933.2 79.8V81.8" fill="none" stroke="#fdd174" stroke-width="1.9" />
<rect x="922.2" y="85.6" width="1.4" height="4.4" fill="#4b566a" />
<rect x="941.5" y="75.6" width="17.2" height="17.2" fill="#ff0000" stroke="#d8d8d8" stroke-width="1.2" />
<path d="M1110.0 82.2H1120.0L1115 87.2Z" fill="#cdcdcd" />
<path d="M871.6 105.6H882.6L877 113.0H866Z" fill="#d4d4d4" />
<circle cx="882" cy="117.2" r="4" fill="#4cc8d2" />
<path d="M880.0 121.0H884.0V122.60000000000001Q882 124.8 880.0 122.60000000000001Z" fill="#f0f0f0" />
<path d="M901.2 113.6H913.4L908.2 120.0H896Z" fill="#8fcbf8" stroke="#3b4453" stroke-width="0.7" />
<path d="M901.2 109.3H913.4L908.2 115.7H896Z" fill="#c8c8c8" stroke="#3b4453" stroke-width="0.7" />
<path d="M901.2 105H913.4L908.2 111.4H896Z" fill="#d8d8d8" stroke="#3b4453" stroke-width="0.7" />
<path d="M914.6 116.4L908 123" fill="none" stroke="#f0f0f0" stroke-width="1.2" />
<path d="M906.6 124.6L907.4 119.6L911.4 123.6Z" fill="#f0f0f0" />
<path d="M931.6 105.6H942.6L937 113.0H926Z" fill="#d4d4d4" />
<line x1="-4.8" y1="0" x2="4.8" y2="0" stroke="#4cc8d2" stroke-width="1.1" transform="translate(939.6 118.4) rotate(30)"/>
<line x1="-4.8" y1="0" x2="4.8" y2="0" stroke="#4cc8d2" stroke-width="1.1" transform="translate(939.6 118.4) rotate(90)"/>
<line x1="-4.8" y1="0" x2="4.8" y2="0" stroke="#4cc8d2" stroke-width="1.1" transform="translate(939.6 118.4) rotate(150)"/>
<circle cx="939.6" cy="118.4" r="2.6" fill="none" stroke="#4cc8d2" stroke-width="0.9" />
<path d="M961.6 105.6H972.6L967 113.0H956Z" fill="#d4d4d4" />
<rect x="966.8" y="117.8" width="9.4" height="7.2" fill="#4cc8d2" />
<path d="M968.6999999999999 117.8V115.39999999999999A2.8 2.8 0 0 1 974.3 115.39999999999999V117.8" fill="none" stroke="#4cc8d2" stroke-width="1.5" />
<rect x="971.0" y="120.0" width="1.1" height="3.0" fill="#3b4453" />
<path d="M990.6 120.2H1006.0L1001.4 124.60000000000001H986Z" fill="#d2d2d2" />
<path d="M990.6 115.4H1006.0L1001.4 119.80000000000001H986Z" fill="#d2d2d2" />
<path d="M990.6 109.6H1006.0L1001.4 115.0H986Z" fill="#8fcbf8" />
<circle cx="996.2" cy="108.4" r="3.8" fill="#c4c4c4" />
<path d="M871.2 144.4H883.4L878.2 150.8H866Z" fill="#d0d0d0" stroke="#3b4453" stroke-width="0.7" />
<path d="M871.2 140.10000000000002H883.4L878.2 146.50000000000003H866Z" fill="#c8c8c8" stroke="#3b4453" stroke-width="0.7" />
<path d="M871.2 135.8H883.4L878.2 142.20000000000002H866Z" fill="#d8d8d8" stroke="#3b4453" stroke-width="0.7" />
<circle cx="882" cy="148.2" r="4" fill="#fdd174" />
<path d="M880.0 152.0H884.0V153.6Q882 155.79999999999998 880.0 153.6Z" fill="#f0f0f0" />
<path d="M901.2 144.4H913.4L908.2 150.8H896Z" fill="#8fcbf8" stroke="#3b4453" stroke-width="0.7" />
<path d="M901.2 140.10000000000002H913.4L908.2 146.50000000000003H896Z" fill="#c8c8c8" stroke="#3b4453" stroke-width="0.7" />
<path d="M901.2 135.8H913.4L908.2 142.20000000000002H896Z" fill="#d8d8d8" stroke="#3b4453" stroke-width="0.7" />
<path d="M907.4 155.2L913.4 149.2" fill="none" stroke="#f0f0f0" stroke-width="1.2" />
<path d="M915 147.4L914.2 152.4L910.2 148.4Z" fill="#f0f0f0" />
<path d="M931.2 144.4H943.4L938.2 150.8H926Z" fill="#d0d0d0" stroke="#3b4453" stroke-width="0.7" />
<path d="M931.2 140.10000000000002H943.4L938.2 146.50000000000003H926Z" fill="#c8c8c8" stroke="#3b4453" stroke-width="0.7" />
<path d="M931.2 135.8H943.4L938.2 142.20000000000002H926Z" fill="#d8d8d8" stroke="#3b4453" stroke-width="0.7" />
<circle cx="939.8" cy="149.6" r="3.2" fill="#fdd174" />
<rect x="944.5" y="148.7" width="1.8" height="1.8" fill="#fdd174" />
<rect x="942.86" y="152.66" width="1.8" height="1.8" fill="#fdd174" />
<rect x="938.9" y="154.3" width="1.8" height="1.8" fill="#fdd174" />
<rect x="934.94" y="152.66" width="1.8" height="1.8" fill="#fdd174" />
<rect x="933.3" y="148.7" width="1.8" height="1.8" fill="#fdd174" />
<rect x="934.94" y="144.74" width="1.8" height="1.8" fill="#fdd174" />
<rect x="938.9" y="143.1" width="1.8" height="1.8" fill="#fdd174" />
<rect x="942.86" y="144.74" width="1.8" height="1.8" fill="#fdd174" />
<path d="M961.6 136.6H972.6L967 144.0H956Z" fill="#d4d4d4" />
<rect x="964" y="148.8" width="9.4" height="7.2" fill="#fdd174" />
<path d="M969.2 148.8V145.8A2.9 2.9 0 0 1 975.0 145.8V147.4" fill="none" stroke="#fdd174" stroke-width="1.5" />
<rect x="968.2" y="151.0" width="1.1" height="3.0" fill="#3b4453" />
<path d="M991.2 144.4H1003.4L998.2 150.8H986Z" fill="#d0d0d0" stroke="#3b4453" stroke-width="0.7" />
<path d="M991.2 140.10000000000002H1003.4L998.2 146.50000000000003H986Z" fill="#c8c8c8" stroke="#3b4453" stroke-width="0.7" />
<path d="M991.2 135.8H1003.4L998.2 142.20000000000002H986Z" fill="#d8d8d8" stroke="#3b4453" stroke-width="0.7" />
<path d="M997.2 146.6L1001.2 143L1005.8 148.2L1001.8 151.8Z" fill="#f0f0f0" />
<path d="M996 147.6L1000.6 152.8L998.6 156L992.6 150.2Z" fill="#f5c860" />
<path d="M973.8 175H983.8L978.8 180Z" fill="#cdcdcd" />
</g>
<path d="M626.5 141.2H633.0999999999999L629.8 145.2Z" fill="#cdcdcd" />
<g id="ribbon-block">
<path d="M1150 70H1165.4L1172 76.6V100.6H1150Z" fill="#8fcbf8" />
<path d="M1165.4 70L1172 76.6H1165.4Z" fill="#d4ebfc" />
<rect x="1133.6" y="83.4" width="25" height="17.6" fill="#6a6e7a" stroke="#c8c8c8" stroke-width="1.2" />
<circle cx="1158" cy="100.6" r="8.8" fill="#6a6e7a" stroke="#c8c8c8" stroke-width="1.2" fill-opacity="0.85"/>
<path d="M1158 91.8V100.6H1149.2" fill="none" stroke="#c8c8c8" stroke-width="0.9" />
<rect x="1131.8" y="99.2" width="3.4" height="3.4" fill="#f0f0f0" />
<path d="M1148.7 139H1155.3L1152 143Z" fill="#cdcdcd" />
<rect x="1182.6" y="81.4" width="10.4" height="8.6" fill="#6a6e7a" stroke="#c4c4c4" stroke-width="1" />
<circle cx="1193.6" cy="90" r="3.4" fill="#6a6e7a" stroke="#c4c4c4" stroke-width="1" fill-opacity="0.8"/>
<path d="M1193.6 84.4V90" fill="none" stroke="#c4c4c4" stroke-width="0.9" />
<rect x="1181" y="89.4" width="2" height="2" fill="#f0f0f0" />
<path d="M1195.40 73.60L1196.24 76.77L1199.08 75.12L1197.43 77.96L1200.60 78.80L1197.43 79.64L1199.08 82.48L1196.24 80.83L1195.40 84.00L1194.56 80.83L1191.72 82.48L1193.37 79.64L1190.20 78.80L1193.37 77.96L1191.72 75.12L1194.56 76.77Z" fill="#fdd174" />
<rect x="1182.6" y="110.6" width="10.4" height="9.6" fill="#6a6e7a" stroke="#c4c4c4" stroke-width="1" />
<circle cx="1194.6" cy="120" r="3.8" fill="#6a6e7a" stroke="#c4c4c4" stroke-width="1" fill-opacity="0.8"/>
<path d="M1194.6 116V120H1198" fill="none" stroke="#c4c4c4" stroke-width="0.9" />
<rect x="1181" y="119.4" width="2" height="2" fill="#f0f0f0" />
<path d="M1190.60 115.60L1194.40 114.18L1192.18 111.87Z" fill="#e8e8e8" />
<path d="M1194.40 114.18L1199.20 109.58L1196.98 107.27L1192.18 111.87Z" fill="#f5c860" />
<path d="M1199.20 109.58L1201.31 107.56Q1201.07 105.57 1199.09 105.24L1196.98 107.27Z" fill="#f0505a" />
<path d="M1181.2 138.2L1188.6 137L1199.2 147.6L1191 156L1182 147Z" fill="#d4d4d4" />
<circle cx="1185" cy="141.2" r="0.9" fill="#3b4453" />
<path d="M1185.6 144.6L1192 151M1188.4 142.8L1190 144.4" fill="none" stroke="#6a6e7a" stroke-width="0.9" />
<path d="M1191.80 145.80L1195.38 144.32L1193.04 142.13Z" fill="#e8e8e8" />
<path d="M1195.38 144.32L1199.68 139.72L1197.34 137.53L1193.04 142.13Z" fill="#f5c860" />
<path d="M1199.68 139.72L1201.57 137.69Q1201.22 135.72 1199.23 135.51L1197.34 137.53Z" fill="#f0505a" />
<path d="M1210.7 144.2H1217.1000000000001L1213.9 148.0Z" fill="#cdcdcd" />
<path d="M1192.0 175H1202.0L1197 180Z" fill="#cdcdcd" />
</g>
<g id="ribbon-properties">
<rect x="1246.4" y="72.2" width="25" height="34.8" fill="#d8d8d8" rx="0.8" />
<rect x="1249.6" y="75.2" width="18.4" height="11.6" fill="#8fcbf8" stroke="#5f97c4" stroke-width="0.8" />
<path d="M1250 93.8H1266M1250 100.2H1262" fill="none" stroke="#777" stroke-width="0.9" />
<path d="M1254.6 91.6V96M1262 98V102.4" fill="none" stroke="#555" stroke-width="1.4" />
<path d="M1273.6 97.2L1281.8 105.4L1276.2 112L1265 100.8Z" fill="#f5c860" />
<path d="M1271.2 98.6L1274.8 95L1277.4 97.6L1281.6 93.4Q1283.4 92.4 1284.6 93.6Q1285.6 95 1284.6 96.4L1280.4 100.6L1283.2 103.4L1279.6 107Z" fill="#f0f0f0" />
<path d="M1315 84L1309.90 75.17A10.2 10.2 0 0 1 1320.10 75.17Z" fill="#fdb72e" />
<path d="M1315 84L1320.10 75.17A10.2 10.2 0 0 1 1325.20 84.00Z" fill="#f78d38" />
<path d="M1315 84L1325.20 84.00A10.2 10.2 0 0 1 1320.10 92.83Z" fill="#e85a5a" />
<path d="M1315 84L1320.10 92.83A10.2 10.2 0 0 1 1309.90 92.83Z" fill="#8a5cf0" />
<path d="M1315 84L1309.90 92.83A10.2 10.2 0 0 1 1304.80 84.00Z" fill="#18a8d8" />
<path d="M1315 84L1304.80 84.00A10.2 10.2 0 0 1 1309.90 75.17Z" fill="#44c680" />
<rect x="1305" y="104.8" width="20" height="1" fill="#d8d8d8" />
<rect x="1305" y="108.2" width="20" height="2.4" fill="#d8d8d8" />
<rect x="1305" y="113.2" width="20" height="3.8" fill="#d8d8d8" />
<rect x="1305" y="120" width="20" height="5" fill="#d8d8d8" />
<path d="M1305 138.4H1324" fill="none" stroke="#c8c8c8" stroke-width="1" stroke-dasharray="1.6 1.4"/>
<path d="M1305 142.4H1324" fill="none" stroke="#c8c8c8" stroke-width="1.2" stroke-dasharray="3.4 1.4"/>
<path d="M1305 145.8H1324" fill="none" stroke="#c8c8c8" stroke-width="1" />
<path d="M1305 149H1324" fill="none" stroke="#c8c8c8" stroke-width="1.2" stroke-dasharray="3.4 1.4"/>
<path d="M1305 152.4H1324" fill="none" stroke="#c8c8c8" stroke-width="1.2" stroke-dasharray="5 0.8"/>
<rect x="1337.6" y="74.6" width="19" height="19" fill="#ff0000" stroke="#e8e8e8" stroke-width="1.2" />
<line x1="1337" y1="114.5" x2="1417" y2="114.5" stroke="#f0f0f0" stroke-width="1" />
<line x1="1337" y1="146.5" x2="1417" y2="146.5" stroke="#f0f0f0" stroke-width="1" />
<path d="M1486.5 82.2H1496.5L1491.5 87.2Z" fill="#cdcdcd" />
<path d="M1486.5 113.2H1496.5L1491.5 118.2Z" fill="#cdcdcd" />
<path d="M1486.5 144.2H1496.5L1491.5 149.2Z" fill="#cdcdcd" />
<path d="M1387.0 175H1397.0L1392 180Z" fill="#cdcdcd" />
<path d="M1489.2 173.6L1494.2 178.6M1490.4 179H1494.8V174.6" fill="none" stroke="#dcdcdc" stroke-width="1.4" />
</g>
<g id="ribbon-groups">
<path d="M1514.6 78.6H1510.2V111.6H1514.6M1532.6 111.6H1537V94" fill="none" stroke="#d8d8d8" stroke-width="1.2" />
<rect x="1517.4" y="83.4" width="12.6" height="9.2" fill="#46628a" stroke="#6cb8f0" stroke-width="1" />
<circle cx="1523.6" cy="102.2" r="6.4" fill="#6a6e7a" stroke="#c4c4c4" stroke-width="1" />
<path d="M1538.20 72.60L1539.57 78.84L1544.63 74.94L1541.66 80.60L1548.05 80.86L1542.14 83.29L1546.86 87.60L1540.77 85.66L1541.62 92.00L1538.20 86.60L1534.78 92.00L1535.63 85.66L1529.54 87.60L1534.26 83.29L1528.35 80.86L1534.74 80.60L1531.77 74.94L1536.83 78.84Z" fill="#fdd174" />
<path d="M1573 74.6H1576V93.4H1573" fill="none" stroke="#d8d8d8" stroke-width="1" />
<rect x="1560.2" y="77" width="7.6" height="5.8" fill="#46628a" stroke="#6cb8f0" stroke-width="1" />
<circle cx="1564" cy="87.4" r="3.6" fill="#6a6e7a" stroke="#b4b4b4" stroke-width="1" />
<path d="M1571 81.6L1577 87.6M1577 81.6L1571 87.6" fill="none" stroke="#f04a5a" stroke-width="1.8" />
<path d="M1561 105.4H1558.4V121.8H1561M1567.4 105.4H1570V116" fill="none" stroke="#d8d8d8" stroke-width="1" />
<rect x="1561.4" y="107.6" width="5.6" height="4.4" fill="#46628a" stroke="#6cb8f0" stroke-width="1" />
<circle cx="1564.2" cy="117" r="2.8" fill="#6a6e7a" stroke="#b4b4b4" stroke-width="1" />
<path d="M1568.20 124.80L1572.02 123.44L1569.64 121.01Z" fill="#e8e8e8" />
<path d="M1572.02 123.44L1576.72 118.84L1574.34 116.41L1569.64 121.01Z" fill="#f5c860" />
<path d="M1576.72 118.84L1578.79 116.81Q1578.46 114.76 1576.41 114.39L1574.34 116.41Z" fill="#f0505a" />
<path d="M1562.4 136H1559.6V153H1562.4M1569 136H1571.8V146" fill="none" stroke="#d8d8d8" stroke-width="1" />
<rect x="1563.2" y="138.6" width="5.4" height="4.4" fill="none" stroke="#58c070" stroke-width="1.1" />
<circle cx="1565.8" cy="149" r="2.8" fill="none" stroke="#58c070" stroke-width="1.1" />
<path d="M1570.2 145.4V154.808L1572.748 152.65200000000002L1574.512 156.18L1575.884 155.39600000000002L1574.316 152.064H1577.256Z" fill="#f4f4f4" />
<path d="M1567.0 175H1577.0L1572 180Z" fill="#cdcdcd" />
</g>
<g id="ribbon-utilities">
<rect x="1613.8" y="87.8" width="35.6" height="8.2" fill="#f5c860" />
<line x1="1616.77" y1="87.8" x2="1616.77" y2="90.2" stroke="#b89030" stroke-width="0.9" />
<line x1="1619.74" y1="87.8" x2="1619.74" y2="91.6" stroke="#b89030" stroke-width="0.9" />
<line x1="1622.71" y1="87.8" x2="1622.71" y2="90.2" stroke="#b89030" stroke-width="0.9" />
<line x1="1625.68" y1="87.8" x2="1625.68" y2="91.6" stroke="#b89030" stroke-width="0.9" />
<line x1="1628.65" y1="87.8" x2="1628.65" y2="90.2" stroke="#b89030" stroke-width="0.9" />
<line x1="1631.62" y1="87.8" x2="1631.62" y2="91.6" stroke="#b89030" stroke-width="0.9" />
<line x1="1634.59" y1="87.8" x2="1634.59" y2="90.2" stroke="#b89030" stroke-width="0.9" />
<line x1="1637.56" y1="87.8" x2="1637.56" y2="91.6" stroke="#b89030" stroke-width="0.9" />
<line x1="1640.53" y1="87.8" x2="1640.53" y2="90.2" stroke="#b89030" stroke-width="0.9" />
<line x1="1643.5" y1="87.8" x2="1643.5" y2="91.6" stroke="#b89030" stroke-width="0.9" />
<line x1="1646.47" y1="87.8" x2="1646.47" y2="90.2" stroke="#b89030" stroke-width="0.9" />
<path d="M1628.7 141.2H1635.3L1632 145.2Z" fill="#cdcdcd" />
<rect x="1687" y="82" width="12" height="11.6" fill="#f0f0f0" />
<path d="M1689.6 85.4H1690.8M1689.6 88H1690.8M1689.6 90.6H1690.8" fill="none" stroke="#3a8ee0" stroke-width="1.2" />
<path d="M1692 85.4H1697M1692 88H1697M1692 90.6H1697" fill="none" stroke="#3a8ee0" stroke-width="1.1" />
<path d="M1686.4 74L1681.6 79.4H1685L1683 83.4L1688.6 77.6H1685.2Z" fill="#fdd174" />
<path d="M1678.6 80.4V90.768L1681.408 88.39200000000001L1683.3519999999999 92.28L1684.8639999999998 91.41600000000001L1683.136 87.744H1686.376Z" fill="#f4f4f4" />
<rect x="1679.2" y="105.4" width="17.6" height="17.6" fill="#1e5a3a" stroke="#44c070" stroke-width="1" stroke-dasharray="2 1.2" fill-opacity="0.55"/>
<rect x="1684.8" y="107" width="10.6" height="10.4" fill="#58c888" />
<path d="M1681 111.6H1684.8V117.4H1691.4V121.4H1681Z" fill="#58c888" />
<path d="M1691 114.6V123.81599999999999L1693.496 121.704L1695.224 125.16L1696.568 124.392L1695.032 121.128H1697.912Z" fill="#f4f4f4" />
<rect x="1680.8" y="135.8" width="14.8" height="20" fill="#d8d8d8" rx="0.8" />
<rect x="1683" y="138.2" width="10.4" height="3.6" fill="#6e6e6e" />
<rect x="1683.0" y="144.4" width="2.8" height="2.2" fill="#6e6e6e" />
<rect x="1686.7" y="144.4" width="2.8" height="2.2" fill="#6e6e6e" />
<rect x="1690.4" y="144.4" width="2.8" height="2.2" fill="#6e6e6e" />
<rect x="1683.0" y="147.9" width="2.8" height="2.2" fill="#6e6e6e" />
<rect x="1686.7" y="147.9" width="2.8" height="2.2" fill="#6e6e6e" />
<rect x="1690.4" y="147.9" width="2.8" height="2.2" fill="#6e6e6e" />
<rect x="1683.0" y="151.4" width="2.8" height="2.2" fill="#6e6e6e" />
<rect x="1686.7" y="151.4" width="2.8" height="2.2" fill="#6e6e6e" />
<rect x="1690.4" y="151.4" width="2.8" height="2.2" fill="#6e6e6e" />
<path d="M1671.9 175H1681.9L1676.9 180Z" fill="#cdcdcd" />
</g>
<g id="ribbon-clipboard">
<rect x="1726" y="77" width="28" height="31.2" fill="#dba869" />
<path d="M1733 78V75.6H1736.4Q1736.8 72.6 1739.6 72.6Q1742.4 72.6 1742.8 75.6H1746.2V78Z" fill="#f4f4f4" />
<path d="M1735 85H1752L1758 91V113.2H1735Z" fill="#d8d8d8" />
<path d="M1752 85L1758 91H1752Z" fill="#f2f2f2" />
<path d="M1738.9 142H1745.5L1742.2 146Z" fill="#cdcdcd" />
<rect x="1778" y="74.2" width="14.6" height="17.4" fill="#d0d0d0" />
<path d="M1780 77.4H1790M1780 80.4H1790M1780 83.4H1786M1780 86.4H1785" fill="none" stroke="#9a9a9a" stroke-width="0.9" />
<path d="M1786.4 80.4L1794.6 90.4M1797.6 81L1789.4 90.4" fill="none" stroke="#f4f4f4" stroke-width="1.7" />
<circle cx="1788.6" cy="91.8" r="2" fill="none" stroke="#f4f4f4" stroke-width="1.3" />
<circle cx="1795.6" cy="91.8" r="2" fill="none" stroke="#f4f4f4" stroke-width="1.3" />
<path d="M1804.9 82.8H1811.1L1808 86.8Z" fill="#cdcdcd" />
<path d="M1780 105H1786.6L1789 107.4V120.6H1780Z" fill="#c4c4c4" />
<path d="M1784 109H1792L1796 113V125H1784Z" fill="#dcdcdc" stroke="#3b4453" stroke-width="0.6" />
<path d="M1792 109L1796 113H1792Z" fill="#f4f4f4" />
<path d="M1804.9 113.8H1811.1L1808 117.8Z" fill="#cdcdcd" />
<path d="M1842 77H1859V90H1882V107H1842Z" fill="#dadada" />
<path d="M1858.5 140H1865.1L1861.8 144Z" fill="#cdcdcd" />
<path d="M1867.6 175H1877.6L1872.6 180Z" fill="#cdcdcd" />
<path d="M1889.2 173.6L1894.2 178.6M1890.4 179H1894.8V174.6" fill="none" stroke="#dcdcdc" stroke-width="1.4" />
</g>
<g id="filetabs">
<line x1="18.2" y1="215.8" x2="27" y2="196.4" stroke="#4a5466" stroke-width="1.2" />
<line x1="232.2" y1="215.8" x2="240" y2="196.4" stroke="#4a5466" stroke-width="1.2" />
<path d="M167.6 201.6L176.6 210.6M176.6 201.6L167.6 210.6" fill="none" stroke="#b6b6b6" stroke-width="1.9" />
<path d="M211 198.4V213.6M203.4 206H218.6" fill="none" stroke="#ececec" stroke-width="2" />
</g>
<g id="layouttabs">
<line x1="138" y1="1090.8" x2="145.6" y2="1071" stroke="#4a5466" stroke-width="1.2" />
<line x1="188" y1="1090.8" x2="195.8" y2="1071" stroke="#4a5466" stroke-width="1.2" />
<path d="M166.8 1073.4V1089M159 1081.2H174.6" fill="none" stroke="#ececec" stroke-width="2" />
</g>
<g id="cmdline">
<rect x="480.4" y="1003.0" width="1.8" height="1.8" fill="#d0d0d0" />
<rect x="480.4" y="1006.6" width="1.8" height="1.8" fill="#d0d0d0" />
<rect x="484.0" y="1003.0" width="1.8" height="1.8" fill="#d0d0d0" />
<rect x="484.0" y="1006.6" width="1.8" height="1.8" fill="#d0d0d0" />
<rect x="487.59999999999997" y="1003.0" width="1.8" height="1.8" fill="#d0d0d0" />
<rect x="487.59999999999997" y="1006.6" width="1.8" height="1.8" fill="#d0d0d0" />
<rect x="491.2" y="1003.0" width="1.8" height="1.8" fill="#d0d0d0" />
<rect x="491.2" y="1006.6" width="1.8" height="1.8" fill="#d0d0d0" />
<rect x="494.79999999999995" y="1003.0" width="1.8" height="1.8" fill="#d0d0d0" />
<rect x="494.79999999999995" y="1006.6" width="1.8" height="1.8" fill="#d0d0d0" />
<rect x="498.4" y="1003.0" width="1.8" height="1.8" fill="#d0d0d0" />
<rect x="498.4" y="1006.6" width="1.8" height="1.8" fill="#d0d0d0" />
<path d="M483 1018.8L493.4 1029.4M493.4 1018.8L483 1029.4" fill="none" stroke="#d8d8d8" stroke-width="2" />
<path d="M484.2 1057.2L491.4 1050" fill="none" stroke="#c8c8c8" stroke-width="2.6" stroke-linecap="round"/>
<path d="M496.6 1046.6A4 4 0 1 0 498.2 1050.6L494.8 1051.4L492.8 1049.4L493.6 1046.2Z" fill="#c8c8c8" />
<rect x="511.5" y="1040.5" width="19" height="14.4" fill="#c6c6c6" stroke="#6e6e6e" stroke-width="1" />
<rect x="511.5" y="1040.5" width="19" height="3.2" fill="#7a7a7a" stroke="#6e6e6e" stroke-width="1" />
<path d="M514 1046.6L516.6 1048.8L514 1051M517.6 1051.4H521.6" fill="none" stroke="#555" stroke-width="1" />
<path d="M534 1045.4H542.4L538.2 1050.2Z" fill="#555" />
<path d="M1429 1051.2L1433.9 1046.2L1438.8 1051.2Z" fill="#555" />
</g>
<g id="statusbar">
<path d="M1272.5 1108V1127.4M1278.5 1108V1127.4M1283.5 1108V1127.4M1269 1112.5H1288M1269 1118.5H1288M1269 1123.5H1288" fill="none" stroke="#e4e4e4" stroke-width="1" />
<rect x="1301.2" y="1110.2" width="2.6" height="2.6" fill="#e4e4e4" />
<rect x="1301.2" y="1116.2" width="2.6" height="2.6" fill="#e4e4e4" />
<rect x="1301.2" y="1122.2" width="2.6" height="2.6" fill="#e4e4e4" />
<rect x="1307.2" y="1110.2" width="2.6" height="2.6" fill="#e4e4e4" />
<rect x="1307.2" y="1116.2" width="2.6" height="2.6" fill="#e4e4e4" />
<rect x="1307.2" y="1122.2" width="2.6" height="2.6" fill="#e4e4e4" />
<rect x="1313.2" y="1110.2" width="2.6" height="2.6" fill="#e4e4e4" />
<rect x="1313.2" y="1116.2" width="2.6" height="2.6" fill="#e4e4e4" />
<rect x="1313.2" y="1122.2" width="2.6" height="2.6" fill="#e4e4e4" />
<path d="M1328.8 1114.8H1338.8L1333.8 1120.0Z" fill="#cdcdcd" />
<path d="M1356.4 1110.4V1119.6M1351.8 1115H1361" fill="none" stroke="#c4c4c4" stroke-width="1.2" />
<rect x="1358.6" y="1120.4" width="13.4" height="4.8" fill="#e4e4e4" />
<rect x="1359.8" y="1121.4" width="1.6" height="2.8" fill="#3b4453" />
<path d="M1383.5 1108V1127.5H1402.6" fill="none" stroke="#c8c8c8" stroke-width="1.1" />
<rect x="1383.5" y="1121.5" width="5.6" height="6" fill="none" stroke="#c8c8c8" stroke-width="1" />
<circle cx="1420.6" cy="1118.2" r="7.8" fill="none" stroke="#f4f4f4" stroke-width="1.1" />
<path d="M1432.8 1118.2H1420.6L1429.6 1109.4" fill="none" stroke="#f4f4f4" stroke-width="1.1" />
<path d="M1442.8 1114.8H1452.8L1447.8 1120.0Z" fill="#cdcdcd" />
<line x1="1465" y1="1109.4" x2="1480" y2="1124.4" stroke="#e05a5a" stroke-width="1.2" />
<line x1="1473.4" y1="1108" x2="1473.4" y2="1125.8" stroke="#58d070" stroke-width="1.2" />
<rect x="1471.4" y="1115.6" width="3.6" height="3.6" fill="#3b4453" stroke="#e8e8e8" stroke-width="0.9" />
<path d="M1492.8 1114.8H1502.8L1497.8 1120.0Z" fill="#cdcdcd" />
<path d="M1514 1124.8H1533.8" fill="none" stroke="#b0b0b0" stroke-width="1.8" />
<path d="M1514.4 1124.2L1528.8 1110.2" fill="none" stroke="#b0b0b0" stroke-width="1.2" />
<rect x="1519.6" y="1116" width="3.4" height="3.4" fill="#d0d0d0" />
<rect x="1546.4" y="1110.4" width="17.2" height="17.2" fill="none" stroke="#f8f8f8" stroke-width="1.1" />
<rect x="1544" y="1108.2" width="5.4" height="5.4" fill="#5b8dc6" stroke="#f8f8f8" stroke-width="1" />
<path d="M1573.6 1114.8H1583.6L1578.6 1120.0Z" fill="#cdcdcd" />
<path d="M1605.8 1107.8L1608.2 1114.4L1610.0 1117.2L1608.6 1119.4L1614.6 1128L1608.0 1123.4L1605.8 1125.4L1603.6 1123.4L1597.0 1128L1603.0 1119.4L1601.6 1117.2L1603.3999999999999 1114.4Z" fill="#ffffff" />
<circle cx="1613" cy="1112.4" r="2.9" fill="none" stroke="#ffffff" stroke-width="1" />
<path d="M1635.8 1107.8L1638.2 1114.4L1640.0 1117.2L1638.6 1119.4L1644.6 1128L1638.0 1123.4L1635.8 1125.4L1633.6 1123.4L1627.0 1128L1633.0 1119.4L1631.6 1117.2L1633.3999999999999 1114.4Z" fill="#d0d0d0" />
<path d="M1643 1107.4L1639 1112.4H1641.6L1639.6 1116.6L1645.2 1110.8H1642.4L1644.8 1107.4Z" fill="#d8d8d8" />
<path d="M1666.4 1107.8L1668.8000000000002 1114.4L1670.6000000000001 1117.2L1669.2 1119.4L1675.2 1128L1668.6000000000001 1123.4L1666.4 1125.4L1664.2 1123.4L1657.6000000000001 1128L1663.6000000000001 1119.4L1662.2 1117.2L1664.0 1114.4Z" fill="#d0d0d0" />
<path d="M1709.0 1114.8H1719.0L1714 1120.0Z" fill="#cdcdcd" />
<circle cx="1742" cy="1118" r="6.6" fill="none" stroke="#dcdcdc" stroke-width="4.2" />
<rect x="-2" y="-10.4" width="4" height="4.4" fill="#dcdcdc" transform="translate(1742 1118) rotate(22.5)"/>
<rect x="-2" y="-10.4" width="4" height="4.4" fill="#dcdcdc" transform="translate(1742 1118) rotate(67.5)"/>
<rect x="-2" y="-10.4" width="4" height="4.4" fill="#dcdcdc" transform="translate(1742 1118) rotate(112.5)"/>
<rect x="-2" y="-10.4" width="4" height="4.4" fill="#dcdcdc" transform="translate(1742 1118) rotate(157.5)"/>
<rect x="-2" y="-10.4" width="4" height="4.4" fill="#dcdcdc" transform="translate(1742 1118) rotate(202.5)"/>
<rect x="-2" y="-10.4" width="4" height="4.4" fill="#dcdcdc" transform="translate(1742 1118) rotate(247.5)"/>
<rect x="-2" y="-10.4" width="4" height="4.4" fill="#dcdcdc" transform="translate(1742 1118) rotate(292.5)"/>
<rect x="-2" y="-10.4" width="4" height="4.4" fill="#dcdcdc" transform="translate(1742 1118) rotate(337.5)"/>
<path d="M1762.0 1114.8H1772.0L1767 1120.0Z" fill="#cdcdcd" />
<path d="M1792.3 1108.4V1127.6M1782.6 1118H1802" fill="none" stroke="#e6e6e6" stroke-width="3" />
<rect x="1816.5" y="1108.5" width="7.6" height="7.6" fill="none" stroke="#e0e0e0" stroke-width="1" />
<circle cx="1831.4" cy="1116.6" r="4.3" fill="none" stroke="#e0e0e0" stroke-width="1" />
<path d="M1823.8 1120.4L1828.4 1127.4H1819.2Z" fill="none" stroke="#e0e0e0" stroke-width="1" stroke-linejoin="miter"/>
<rect x="1857.5" y="1110.5" width="19.4" height="14.4" fill="none" stroke="#d8d8d8" stroke-width="1.2" />
<path d="M1870.4 1112.4H1874.8V1116.8ZM1859.6 1118.6V1123H1864Z" fill="#d8d8d8" />
<path d="M1874 1113.2L1870.6 1116.6M1860.4 1122.2L1863.8 1118.8" fill="none" stroke="#d8d8d8" stroke-width="1.2" />
<rect x="1886.8" y="1108.8" width="20.2" height="2.6" fill="#e8e8e8" />
<rect x="1886.8" y="1116.2" width="20.2" height="2.8" fill="#d8d8d8" />
<rect x="1886.8" y="1123.8" width="20.2" height="2.6" fill="#e8e8e8" />
</g>
</svg>
</div></body></html>
